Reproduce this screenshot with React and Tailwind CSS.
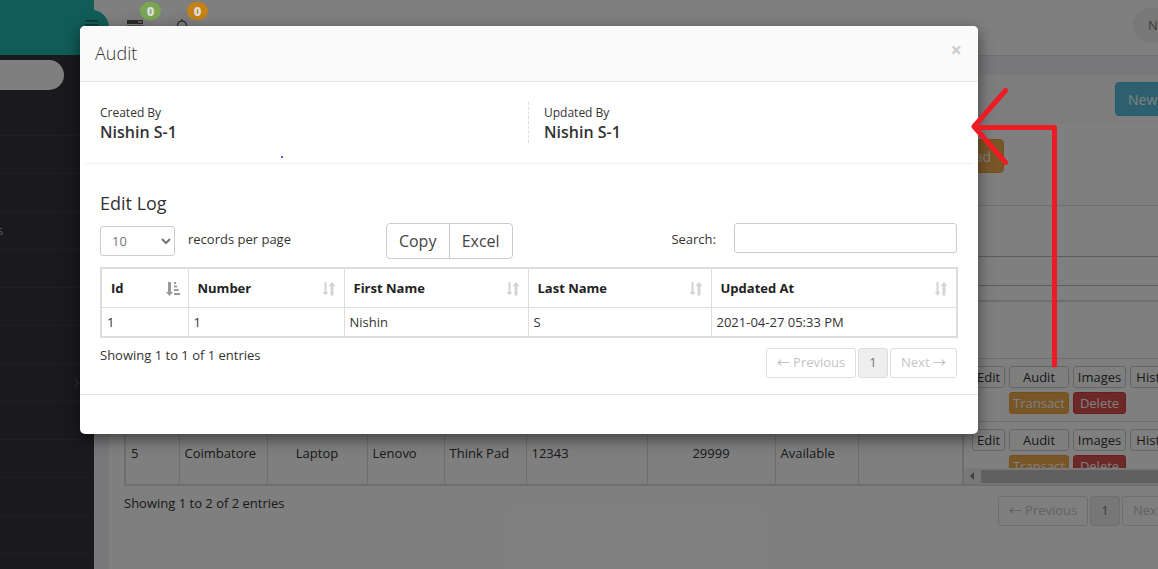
import React from "react";

const menu = ["", "", "s", "", "", "", "", "", "", "", "", ""];

const assets = [
  { text: "5", className: "w-[53px]" },
  { text: "Coimbatore", className: "w-[88px]" },
  { text: "Laptop", className: "w-[100px] text-center" },
  { text: "Lenovo", className: "w-[77px]" },
  { text: "Think Pad", className: "w-[82px]" },
  { text: "12343", className: "w-[121px]" },
  { text: "29999", className: "w-[128px] text-center" },
  { text: "Available", className: "w-[83px]" },
  { text: "", className: "" },
];

const logColumns = [
  { title: "Id", value: "1", className: "w-[86px]", sorted: true },
  { title: "Number", value: "1", className: "w-[156px]" },
  { title: "First Name", value: "Nishin", className: "w-[184px]" },
  { title: "Last Name", value: "S", className: "w-[183px]" },
  { title: "Updated At", value: "2021-04-27 05:33 PM", className: "" },
];

function SortIcon({ sorted }) {
  if (sorted) {
    return (
      <svg width="14" height="14" viewBox="0 0 14 14" fill="#999" aria-hidden="true">
        <path d="M2 0h3v10h2l-3.500 4L0 10h2z" />
        <path d="M8 0h2v2H8zM8 3.500h3v2H8zM8 7h4.500v2H8zM8 11h6v2H8z" />
      </svg>
    );
  }
  return (
    <svg width="14" height="14" viewBox="0 0 14 14" fill="#d4d4d4" aria-hidden="true">
      <path d="M2.500 0h2v10h2l-3 3.500L.5 10h2z" />
      <path d="M8.500 13.500h3V4h2L10 0 6.500 4h2z" />
    </svg>
  );
}

function Pagination() {
  const base = "h-[30px] rounded-[3px] border border-[#ddd] text-[13px] font-medium whitespace-nowrap";
  return (
    <nav className="flex shrink-0 gap-0.5" aria-label="Pages">
      <button className={`${base} w-[90px] bg-white text-[#c4c4c4]`}>
        <span className="font-['Noto_Sans_CJK_SC',sans-serif] leading-4">←</span> Previous
      </button>
      <button className={`${base} w-[30px] bg-[#eee] text-[#777]`}>1</button>
      <button className={`${base} w-[67px] bg-white text-[#c4c4c4]`}>
        Next <span className="font-['Noto_Sans_CJK_SC',sans-serif] leading-4">→</span>
      </button>
    </nav>
  );
}

function RowActions() {
  const base = "h-[22px] rounded-[3px] border text-[13px] leading-5";
  const plain = "border-[#ccc] bg-white text-[#333]";
  return (
    <div className="grid h-[63px] shrink-0 grid-cols-[33px_60px_53px_56px] content-start gap-1 border-t border-[#ddd] pt-[7px] pl-2">
      <button className={`${base} ${plain}`}>Edit</button>
      <button className={`${base} ${plain}`}>Audit</button>
      <button className={`${base} ${plain}`}>Images</button>
      <button className={`${base} ${plain}`}>History</button>
      <button className={`${base} col-start-2 border-[#eea236] bg-[#f0ad4e] text-white`}>Transact</button>
      <button className={`${base} border-[#d43f3a] bg-[#d9534f] text-white`}>Delete</button>
    </div>
  );
}

function TopBar() {
  return (
    <header className="flex h-[55px] bg-white">
      <div className="w-[94px] shrink-0 bg-[#22b8af]" />
      <div className="flex flex-1 items-start">
        <button
          aria-label="Toggle menu"
          className="mt-[10px] -ml-5 flex h-[35px] w-[35px] shrink-0 justify-center rounded-full bg-[#22b8af] pt-[10px]"
        >
          <svg width="14" height="14" viewBox="0 0 14 14" fill="#176f6a" aria-hidden="true">
            <path d="M0 0h13v1.500H0zM0 4h13v1.500H0zM0 8h13v1.500H0z" />
          </svg>
        </button>
        <div className="mt-[11px] ml-[9px] flex h-[34px] w-[34px] justify-center rounded-full bg-[#f9f9f9] pt-[9px]">
          <svg width="18" height="14" viewBox="0 0 18 14" fill="#555" aria-hidden="true">
            <path fillRule="evenodd" d="M1 0h16v4H1zM12 1.300h4v1.200h-4z" />
            <path d="M1 5.500h16v4H1z" />
          </svg>
        </div>
        <div className="mt-[11px] ml-[13px] flex h-[34px] w-[34px] justify-center rounded-full bg-[#f9f9f9] pt-2">
          <svg width="14" height="15" viewBox="0 0 14 15" fill="none" stroke="#555" strokeWidth="1.300" aria-hidden="true">
            <path d="M7 0v2M1 12c2-2 1.500-4 1.500-5.500a4.500 4.500 0 0 1 9 0C11.500 8 11 10 13 12z" />
          </svg>
        </div>
      </div>
      <button className="mt-2 -mr-[75px] flex h-[35px] w-[100px] shrink-0 items-center rounded-full bg-[#f1f1f1] pl-[15px] text-[13px] text-[#777]">
        Nishin
      </button>
    </header>
  );
}

function Sidebar() {
  return (
    <aside className="w-[94px] shrink-0 bg-[#34333b] pt-[5px]">
      <input aria-label="Search menu" className="-ml-4 block h-[30px] w-20 rounded-full bg-white" />
      <ul className="mt-[45px]">
        {menu.map((item, i) => (
          <li key={i} className="flex h-[38px] items-center justify-between border-t border-[#3f3e46] pr-[14px] text-[13px] text-[#aaa]">
            <span className="-ml-[3px]">{item}</span>
            {i === 6 && (
              <svg width="6" height="10" viewBox="0 0 6 10" fill="none" stroke="#777" aria-hidden="true">
                <path d="M.5 1l4 4-4 4" />
              </svg>
            )}
          </li>
        ))}
      </ul>
    </aside>
  );
}

function AssetsPage() {
  return (
    <main className="min-w-0 flex-1 border-t border-[#e1e1e6] bg-[#f1f1f6] pt-[19px] pl-[15px]">
      <section className="h-full bg-white">
        <div className="flex h-[49px] items-start justify-end overflow-hidden bg-[#fafafa] pt-[7px]">
          <button className="-mr-[17px] h-[34px] w-[60px] shrink-0 rounded border border-[#46b8da] bg-[#5bc0de] pl-3 text-left text-[14px] text-white">
            New
          </button>
        </div>
        <div className="flex h-[82px] justify-end border-b border-[#ddd] pt-[15px] pr-[154px]">
          <button className="h-[34px] rounded border border-[#eea236] bg-[#f0ad4e] px-3 text-[14px] text-white">
            Upload
          </button>
        </div>
        <div className="pt-[50px] pl-[15px]">
          <input aria-label="Filter" className="block h-[30px] w-full border-y border-[#bbb]" />
          <div className="mt-[14px] flex h-[186px]">
            <div className="flex min-w-0 flex-1 flex-col justify-end border-2 border-[#ddd]">
              <table className="w-full table-fixed border-collapse">
                <tbody>
                  <tr className="h-[63px] border-t border-[#ddd]">
                    {assets.map((cell, i) => (
                      <td
                        key={i}
                        className={`${cell.className} border-r border-[#ddd] px-[5px] pt-0.5 text-[13px] text-[#333] last:border-r-0`}
                      >
                        {cell.text}
                      </td>
                    ))}
                  </tr>
                </tbody>
              </table>
            </div>
            <div className="flex w-[194px] shrink-0 flex-col overflow-hidden border-y-2 border-[#ddd]">
              <div className="h-14 shrink-0" />
              <RowActions />
              <div className="h-[47px] overflow-hidden">
                <RowActions />
              </div>
              <div className="flex h-4 shrink-0 items-center bg-[#f1f1f1]">
                <svg width="17" height="8" viewBox="0 0 17 8" fill="#808080" aria-hidden="true">
                  <path d="M10 0v8L6 4z" />
                </svg>
                <div className="h-[13px] flex-1 bg-[#c1c1c1]" />
              </div>
            </div>
          </div>
          <div className="mt-[10px] flex justify-between">
            <p className="text-[13px] leading-[14px] text-[#333]">Showing 1 to 2 of 2 entries</p>
            <div className="-mr-[31px]">
              <Pagination />
            </div>
          </div>
        </div>
      </section>
    </main>
  );
}

function AuditDialog() {
  return (
    <div
      role="dialog"
      aria-labelledby="audit-title"
      className="relative mt-[26px] mr-[180px] ml-20 overflow-hidden rounded-[5px] bg-white shadow-[0_5px_15px_rgba(0,0,0,0.5)]"
    >
      <div className="flex h-14 items-center justify-between border-b border-[#e5e5e5] bg-[#fafafa] pr-4 pl-[15px]">
        <h2 id="audit-title" className="text-[18px] font-light text-[#333]">Audit</h2>
        <button aria-label="Close" className="-mt-2 text-[20px] leading-5 font-bold text-[#ccc]">×</button>
      </div>

      <div className="mx-[5px] flex border-b border-[#eee] pt-5 pb-5">
        <div className="w-1/2 border-r border-dashed border-[#ddd] pt-0.5 pl-[15px]">
          <p className="text-[12px] leading-[18px] text-[#333]">Created By</p>
          <p className="text-[16px] leading-[21px] font-semibold text-[#333]">Nishin S-1</p>
        </div>
        <div className="flex-1 pt-0.5 pl-[15px]">
          <p className="text-[12px] leading-[18px] text-[#333]">Updated By</p>
          <p className="text-[16px] leading-[21px] font-semibold text-[#333]">Nishin S-1</p>
        </div>
      </div>
      <span className="absolute top-[130px] left-[201px] h-0.5 w-0.5 rounded-full bg-[#2a2aff]" />

      <div className="px-5 pt-[29px] pb-4">
        <h3 className="text-[18px] leading-5 text-[#333]">Edit Log</h3>
        <div className="mt-[10px] flex items-start pr-px">
          <label className="flex w-1/3 items-center gap-[13px] text-[13px] text-[#333]">
            <select className="mt-[3px] h-[30px] w-[75px] rounded-[3px] border border-[#ccc] bg-white pl-[7px] text-[13px] text-[#777]">
              <option>10</option>
            </select>
            records per page
          </label>
          <div className="flex flex-1">
            <button className="h-9 w-16 rounded-l border border-[#ccc] text-[16px] text-[#444]">Copy</button>
            <button className="-ml-px h-9 w-16 rounded-r border border-[#ccc] text-[16px] text-[#444]">Excel</button>
          </div>
          <label className="flex items-center gap-[18px] text-[13px] text-[#333]">
            <span className="pt-[3px]">Search:</span>
            <input type="search" className="h-[30px] w-[223px] rounded-[3px] border border-[#ccc] px-2" />
          </label>
        </div>

        <div className="mt-2 border-2 border-[#ddd]">
          <table className="w-full table-fixed border-collapse text-[13px] text-[#333]">
            <thead>
              <tr className="h-[38px]">
                {logColumns.map((c) => (
                  <th key={c.title} className={`${c.className} border-r border-[#ddd] pt-0.5 pr-2 pl-[9px] text-left font-bold text-[#222] last:border-r-0`}>
                    <span className="flex items-center justify-between">
                      {c.title}
                      <SortIcon sorted={c.sorted} />
                    </span>
                  </th>
                ))}
              </tr>
            </thead>
            <tbody>
              <tr className="h-[29px] border-t border-[#ddd]">
                {logColumns.map((c) => (
                  <td key={c.title} className="border-r border-[#ddd] px-[5px] pt-0.5 last:border-r-0">{c.value}</td>
                ))}
              </tr>
            </tbody>
          </table>
        </div>

        <div className="mt-[10px] flex justify-between pr-px">
          <p className="text-[13px] leading-[14px] text-[#333]">Showing 1 to 1 of 1 entries</p>
          <Pagination />
        </div>
      </div>
      <div className="h-10 border-t border-[#e5e5e5]" />
    </div>
  );
}

export default function App() {
  const badge = "absolute top-0.5 h-[18px] w-[21px] rounded-full text-center text-[13px] leading-[18px] font-extrabold text-[#ddd]";
  return (
    <div className="relative flex min-h-screen flex-col overflow-hidden font-['Open_Sans','Noto_Sans',sans-serif]">
      <div className="flex h-screen flex-col overflow-hidden">
        <TopBar />
        <div className="flex min-h-0 flex-1 overflow-hidden">
          <Sidebar />
          <AssetsPage />
        </div>
      </div>

      <div className="absolute inset-0 bg-black/50">
        <span className={`${badge} left-[140px] bg-[#7aa653]`}>0</span>
        <span className={`${badge} left-[187px] bg-[#c48216]`}>0</span>
        <AuditDialog />
        <svg
          className="absolute top-[85px] right-[96px]"
          width="92"
          height="286"
          viewBox="0 0 92 286"
          fill="none"
          stroke="#ed1c24"
          strokeWidth="5"
          strokeLinecap="round"
          strokeLinejoin="round"
          aria-hidden="true"
        >
          <path d="M84.500 280V42.500H5M35.500 5.500L4 41.500L35.500 77.500" />
        </svg>
      </div>
    </div>
  );
}
